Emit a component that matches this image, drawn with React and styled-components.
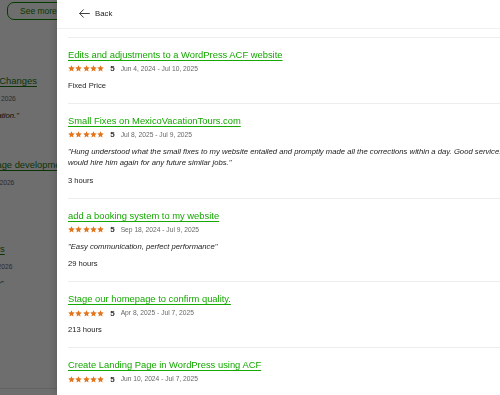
import React from "react";
import styled, { createGlobalStyle } from "styled-components";

const GlobalStyle = createGlobalStyle`
  html, body {
    margin: 0;
    padding: 0;
    overflow: hidden;
    background: #fff;
    font-family: "Liberation Sans", Arial, sans-serif;
  }
  * {
    box-sizing: border-box;
  }
`;

const Page = styled.div`
  width: 500px;
  height: 395px;
  overflow: hidden;
  display: flex;
  flex-direction: column;
`;

const PageTop = styled.div`
  display: flex;
  padding: 2px 0 0 7px;
`;

const OutlineButton = styled.button`
  height: 18px;
  padding: 0 12px;
  border: 1.5px solid #108a00;
  border-radius: 7px;
  background: #fff;
  color: #108a00;
  font-family: inherit;
  font-size: 8.5px;
  white-space: nowrap;
`;

const PageList = styled.div`
  display: flex;
  flex-direction: column;
  margin: 54px 0 6px -63px;
  width: 400px;
  flex: 1;
  border-bottom: 1px solid #e4e4e4;
`;

const PageItem = styled.div`
  display: flex;
  flex-direction: column;
  gap: 6px;
  height: 84px;
`;

const Overlay = styled.div`
  position: fixed;
  inset: 0;
  background: rgba(0, 0, 0, 0.57);
`;

const Drawer = styled.aside`
  position: fixed;
  top: 0;
  bottom: 0;
  left: 57px;
  width: 470px;
  background: #fff;
  display: flex;
  flex-direction: column;
  box-shadow: -2px 0 8px rgba(0, 0, 0, 0.15);
`;

const Header = styled.div`
  height: 34px;
  padding: 6px 0 0 21px;
  border-bottom: 1px solid #f0f0f0;
`;

const BackLink = styled.button`
  display: flex;
  align-items: center;
  gap: 4px;
  height: 14px;
  padding: 0;
  border: 0;
  background: none;
  color: #222;
  font-family: inherit;
  font-size: 7.8px;
`;

const List = styled.div`
  margin-top: 8px;
  padding: 0 11px;
  display: flex;
  flex-direction: column;
`;

const Item = styled.div`
  border-top: 1px solid #ededed;
  padding: 10px 0 11px;
  display: flex;
  flex-direction: column;
`;

const Title = styled.a`
  font-size: 9.4px;
  line-height: 14px;
  color: ${(p) => (p.$dim ? "#1b7a0e" : "#14a800")};
  text-decoration: underline;
  text-underline-offset: 1.5px;
  white-space: nowrap;
`;

const Meta = styled.div`
  margin-top: 2px;
  height: 10px;
  display: flex;
  align-items: center;
  gap: 6px;
`;

const Stars = styled.div`
  display: flex;
  gap: 0.3px;
`;

const Score = styled.span`
  font-size: 8px;
  font-weight: 700;
  color: #333;
`;

const DateRange = styled.span`
  font-size: 6.7px;
  line-height: 10px;
  color: #676767;
  white-space: nowrap;
`;

const Quote = styled.p`
  margin: ${(p) => (p.$flush ? "0" : "6px 0 0")};
  font-size: 7.7px;
  line-height: 11.5px;
  font-style: italic;
  color: #222;
  white-space: ${(p) => (p.$flush ? "nowrap" : "normal")};
`;

const Detail = styled.div`
  margin-top: 6px;
  font-size: 7.6px;
  line-height: 12px;
  color: #222;
  white-space: nowrap;
`;

function Star() {
  return (
    <svg width="7" height="7" viewBox="0 0 24 24">
      <path
        fill="#e2751b"
        d="M12 1l3.3 7.1 7.7.8-5.8 5.3 1.7 7.7L12 18 5.1 21.9l1.7-7.7L1 8.9l7.7-.8z"
      />
    </svg>
  );
}

function BackArrow() {
  return (
    <svg width="13" height="13" viewBox="0 0 24 24" fill="none" stroke="#222" strokeWidth="1.6" strokeLinecap="round" strokeLinejoin="round">
      <path d="M21 12H3.5M10 5l-7 7 7 7" />
    </svg>
  );
}

const jobs = [
  {
    title: "Edits and adjustments to a WordPress ACF website",
    dates: "Jun 4, 2024 - Jul 10, 2025",
    detail: "Fixed Price",
  },
  {
    title: "Small Fixes on MexicoVacationTours.com",
    dates: "Jul 8, 2025 - Jul 9, 2025",
    quote:
      "\"Hung understood what the small fixes to my website entailed and promptly made all the corrections within a day. Good service. I would hire him again for any future similar jobs.\"",
    detail: "3 hours",
  },
  {
    title: "add a booking system to my website",
    dates: "Sep 18, 2024 - Jul 9, 2025",
    quote: "\"Easy communication, perfect performance\"",
    detail: "29 hours",
  },
  {
    title: "Stage our homepage to confirm quality.",
    dates: "Apr 8, 2025 - Jul 7, 2025",
    detail: "213 hours",
  },
  {
    title: "Create Landing Page in WordPress using ACF",
    dates: "Jun 10, 2024 - Jul 7, 2025",
  },
];

const pageJobs = [
  { title: "Small Website Changes", dates: "Jul 20, 2025 - Jul 22, 2026", quote: "\"Great for our vacation.\"" },
  { title: "New landing page development", dates: "Jun 2, 2025 - Jul 12, 2026" },
  { title: "Simple site fixes", dates: "May 4, 2025 - Jul 7, 2026", quote: "\"Done very quickly\"" },
];

export default function App() {
  return (
    <>
      <GlobalStyle />
      <Page>
        <PageTop>
          <OutlineButton>See more projects</OutlineButton>
        </PageTop>
        <PageList>
          {pageJobs.map((job) => (
            <PageItem key={job.title}>
              <Title $dim>{job.title}</Title>
              <DateRange>{job.dates}</DateRange>
              {job.quote && <Quote $flush>{job.quote}</Quote>}
            </PageItem>
          ))}
        </PageList>
      </Page>
      <Overlay />
      <Drawer>
        <Header>
          <BackLink>
            <BackArrow />
            Back
          </BackLink>
        </Header>
        <List>
          {jobs.map((job) => (
            <Item key={job.title}>
              <Title href="#">{job.title}</Title>
              <Meta>
                <Stars>
                  {[0, 1, 2, 3, 4].map((i) => (
                    <Star key={i} />
                  ))}
                </Stars>
                <Score>5</Score>
                <DateRange>{job.dates}</DateRange>
              </Meta>
              {job.quote && <Quote>{job.quote}</Quote>}
              {job.detail && <Detail>{job.detail}</Detail>}
            </Item>
          ))}
        </List>
      </Drawer>
    </>
  );
}
